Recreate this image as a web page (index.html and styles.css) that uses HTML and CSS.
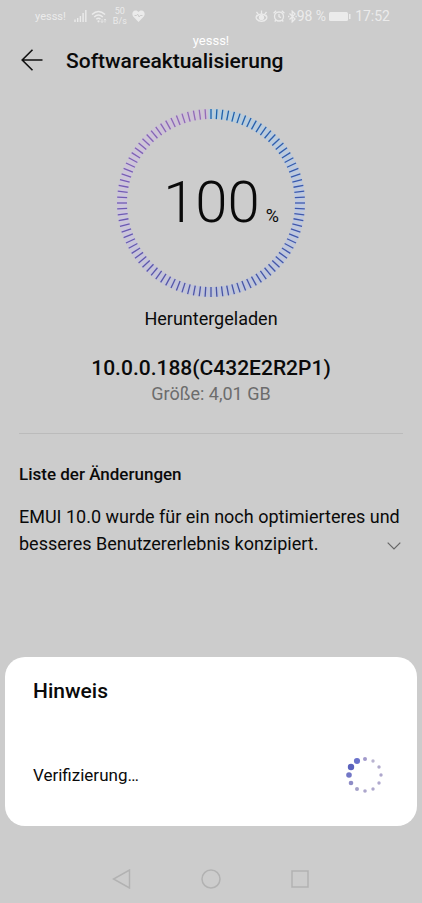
FILE: index.html
```html
<!DOCTYPE html>
<html lang="de">
<head>
    <meta charset="UTF-8">
    <meta name="viewport" content="width=device-width, initial-scale=1.0">
    <title>Softwareaktualisierung</title>
    <link rel="stylesheet" href="styles.css">
</head>
<body>
    <div class="screen">
        <div class="status">
            <div class="status-left">
                <span class="carrier">yesss!</span>
                <svg class="signal" width="13" height="12" viewBox="0 0 13 12">
                    <path d="M1 12V9.500M3.700 12V8M6.400 12V6M9.100 12V3M11.800 12V0" fill="none" stroke="currentColor" stroke-width="1.400"/>
                </svg>
                <svg class="wifi" width="16" height="13" viewBox="0 0 16 13">
                    <path d="M1 4.500Q7.500-1.500 14 4.500M3.200 7Q7.500 3 11.800 7M5.300 9.300Q7.500 7.300 9.500 9.300" fill="none" stroke="currentColor" stroke-width="1.500"/>
                    <circle cx="7.500" cy="11.300" r="1.100" fill="currentColor"/>
                    <path d="M11 9v3.500M9.800 11.300l1.200 1.200 1.200-1.200M14 12.500V9M12.800 10.200L14 9l1.200 1.200" fill="none" stroke="currentColor" stroke-width=".8"/>
                </svg>
                <span class="speed">50<br>B/s</span>
                <svg width="13" height="12" viewBox="0 0 13 12">
                    <path d="M6.500 12L1.200 6.500C-.5 4.300.4.700 3.300.500 4.700.300 5.800 1 6.500 2 7.200 1 8.300.300 9.700.500c2.900.200 3.800 3.800 2.100 6z" fill="currentColor"/>
                    <path d="M2.500 5.500h2l1.200-1.300 1.500 2.800 1-1.500h2.300" fill="none" stroke="#ccc" stroke-width="1"/>
                </svg>
            </div>
            <div class="status-right">
                <svg width="13" height="12" viewBox="0 0 13 12" fill="none" stroke="currentColor" stroke-width="1.300">
                    <path d="M2.200 4.800C-.5 8 2.500 11.300 6.500 11.300S13.500 8 10.800 4.800M1.500 6.500Q6.500 1.500 11.500 6.500M6.500 3.500V.500M3.300 4.300L1.500 1.800M9.700 4.300L11.500 1.800"/>
                    <circle cx="6.500" cy="7.500" r="2" fill="currentColor"/>
                </svg>
                <svg class="alarm" width="12" height="12" viewBox="0 0 12 12" fill="none" stroke="currentColor" stroke-width="1.300">
                    <circle cx="6" cy="6.500" r="4.500"/>
                    <path d="M6 4v2.700l2 1M.6 3.200L3.200.800M11.400 3.200L8.800.800M3 10l-1.300 1.500M9 10l1.300 1.500"/>
                </svg>
                <svg width="9" height="13" viewBox="0 0 9 13" fill="none" stroke="currentColor" stroke-width="1.300">
                    <path d="M1.500 3.500L7 9 4.200 11.800V1.200L7 4 1.500 9.500"/>
                    <path d="M0 6.500h1.400M7.400 6.500h1.400"/>
                </svg>
                <span>98 %</span>
                <svg class="battery" width="22" height="9" viewBox="0 0 22 9" fill="currentColor">
                    <rect width="19" height="9" rx="1.500"/>
                    <path d="M20 2h1.500v5H20z"/>
                </svg>
                <span>17:52</span>
            </div>
        </div>
        <div class="overlay-carrier">yesss!</div>

        <header class="header">
            <button class="back" type="button" aria-label="Zurück">
                <svg width="22" height="22" viewBox="0 0 22 22" fill="none" stroke="#111" stroke-width="1.600">
                    <path d="M21.500 11H1.200M11.500.700L1.200 11l10.300 10.300"/>
                </svg>
            </button>
            <h1>Softwareaktualisierung</h1>
        </header>

        <main class="content">
            <div class="progress">
                <svg class="ring" id="ring" viewBox="-95 -95 190 190"></svg>
                <div class="value">100<small>%</small></div>
            </div>
            <p class="state">Heruntergeladen</p>
            <p class="version">10.0.0.188(C432E2R2P1)</p>
            <p class="size">Größe: 4,01 GB</p>

            <section class="changes">
                <h2>Liste der Änderungen</h2>
                <div class="changes-row">
                    <p>EMUI 10.0 wurde für ein noch optimierteres und besseres Benutzererlebnis konzipiert.</p>
                    <button class="expand" type="button" aria-label="Mehr anzeigen">
                        <svg width="14" height="8" viewBox="0 0 14 8" fill="none" stroke="#666" stroke-width="1.200">
                            <path d="M.7.700L7 7 13.300.700"/>
                        </svg>
                    </button>
                </div>
            </section>
        </main>

        <div class="dialog" role="dialog" aria-labelledby="dialogTitle">
            <h2 id="dialogTitle">Hinweis</h2>
            <div class="dialog-row">
                <span>Verifizierung…</span>
                <svg class="spinner" width="40" height="40" viewBox="-20 -20 40 40">
                    <circle cx="0" cy="-16" r="2" fill="#a29acb"/>
                    <circle cx="8" cy="-14" r="1.700" fill="#b9b4d0"/>
                    <circle cx="14" cy="-8" r="1.700" fill="#b0aacb"/>
                    <circle cx="16" cy="0" r="1.700" fill="#aea7cc"/>
                    <circle cx="14" cy="8" r="1.700" fill="#b0a9ce"/>
                    <circle cx="8" cy="14" r="1.700" fill="#aea8cc"/>
                    <circle cx="0" cy="16" r="1.800" fill="#aca6cc"/>
                    <circle cx="-8" cy="14" r="2" fill="#a4a1c8"/>
                    <circle cx="-14" cy="8" r="2.300" fill="#8e8cc6"/>
                    <circle cx="-16" cy="0" r="2.800" fill="#7277c6"/>
                    <circle cx="-14" cy="-8" r="3.200" fill="#5a62bd"/>
                    <circle cx="-8" cy="-14" r="3.100" fill="#6a72cb"/>
                </svg>
            </div>
        </div>

        <nav class="navbar">
            <button type="button" aria-label="Zurück">
                <svg width="20" height="20" viewBox="0 0 20 20"><path d="M17.500 1v18L1.500 10z"/></svg>
            </button>
            <button type="button" aria-label="Startseite">
                <svg width="20" height="20" viewBox="0 0 20 20"><circle cx="10" cy="10" r="9"/></svg>
            </button>
            <button type="button" aria-label="Letzte Apps">
                <svg width="20" height="20" viewBox="0 0 20 20"><path d="M2 2h16v16H2z"/></svg>
            </button>
        </nav>
    </div>

    <script>
        const ring = document.getElementById('ring');
        const TICKS = 100;
        // tick colour and glow at 0, 25, 50, 75 and 100 %
        const tickStops = [[28, 98, 170], [62, 88, 172], [72, 84, 164], [112, 90, 180], [150, 108, 184]];
        const glowStops = [[170, 208, 232], [184, 200, 236], [184, 192, 226], [208, 196, 230], [208, 190, 218]];

        function colorAt(stops, t) {
            const pos = t * (stops.length - 1);
            const i = Math.floor(pos);
            const next = stops[Math.min(i + 1, stops.length - 1)];
            return `rgb(${stops[i].map((c, k) => Math.round(c + (next[k] - c) * (pos - i))).join(',')})`;
        }

        function addLines(stops, width, opacity) {
            for (let i = 0; i < TICKS; i++) {
                const line = document.createElementNS('http://www.w3.org/2000/svg', 'line');
                line.setAttribute('y1', -94);
                line.setAttribute('y2', -84);
                line.setAttribute('stroke', colorAt(stops, i / TICKS));
                line.setAttribute('stroke-width', width);
                line.setAttribute('opacity', opacity);
                line.setAttribute('transform', `rotate(${i * 360 / TICKS})`);
                ring.appendChild(line);
            }
        }

        addLines(glowStops, 5, 0.7);
        addLines(tickStops, 1.3, 1);
    </script>
</body>
</html>
```
FILE: styles.css
```css
* {
    box-sizing: border-box;
}
body {
    margin: 0;
    font-family: Roboto, sans-serif;
    background: #ccc;
    color: #0a0a0a;
}
h1, h2, p {
    margin: 0;
    font-weight: 500;
}
button {
    display: flex;
    padding: 0;
    border: none;
    background: none;
}
.screen {
    position: relative;
    display: flex;
    flex-direction: column;
    min-height: 100vh;
}
.status {
    display: flex;
    justify-content: space-between;
    height: 32px;
    padding: 0 32px 0 35px;
    color: #ebebeb;
    font-size: 14px;
}
.status-left, .status-right {
    display: flex;
    align-items: center;
}
.carrier {
    font-size: 11px;
    margin-right: 8px;
}
.wifi {
    margin: 0 6px 0 4px;
}
.speed {
    font-size: 9px;
    line-height: 10px;
    text-align: center;
    margin-right: 5px;
}
.alarm {
    margin: 0 3px 0 5px;
}
.battery {
    margin: 0 4px 0 3px;
}
.overlay-carrier {
    position: absolute;
    top: 34px;
    left: 0;
    right: 0;
    font-size: 13px;
    line-height: 14px;
    text-align: center;
    color: #fff;
}
.header {
    display: flex;
    align-items: center;
    gap: 23px;
    height: 56px;
    padding: 0 21px;
}
.header h1 {
    font-size: 21px;
    line-height: 28px;
    padding-top: 2px;
}
.content {
    flex: 1;
    padding: 20px 19px 0;
    text-align: center;
}
.progress {
    display: grid;
    place-items: center;
    margin-bottom: 9px;
}
.ring, .value {
    grid-area: 1 / 1;
}
.ring {
    width: 190px;
}
.value {
    font-size: 58px;
    font-weight: 300;
    line-height: 60px;
    padding: 12px 0 0 20px;
}
.value small {
    font-size: 18px;
    font-weight: 400;
    margin-left: 6px;
}
.state {
    font-size: 18px;
    font-weight: 400;
    line-height: 24px;
    margin-bottom: 23px;
}
.version {
    font-size: 21px;
    line-height: 28px;
}
.size {
    font-size: 18px;
    font-weight: 400;
    line-height: 24px;
    color: #6c6c6c;
    padding-bottom: 27px;
    border-bottom: 1px solid #bbb;
}
.changes {
    padding-top: 28px;
    text-align: left;
}
.changes h2 {
    font-size: 17px;
    line-height: 24px;
    margin-bottom: 17px;
}
.changes-row {
    display: flex;
    align-items: flex-end;
}
.changes-row p {
    flex: 1;
    font-size: 18px;
    font-weight: 400;
    line-height: 27px;
}
/* the arrow sits in the free end of the last text line */
.expand {
    margin: 0 2px 7px -16px;
}
.dialog {
    margin: 0 5px;
    padding: 20px 32px 31px 28px;
    border-radius: 20px;
    background: #fff;
}
.dialog h2 {
    font-size: 21px;
    line-height: 28px;
    margin-bottom: 50px;
}
.dialog-row {
    display: flex;
    align-items: center;
    justify-content: space-between;
    font-size: 17px;
}
.navbar {
    display: flex;
    justify-content: center;
    gap: 69px;
    padding: 43px 0 14px;
}
.navbar svg {
    fill: none;
    stroke: #b2b2b2;
    stroke-width: 1.5px;
}
```
